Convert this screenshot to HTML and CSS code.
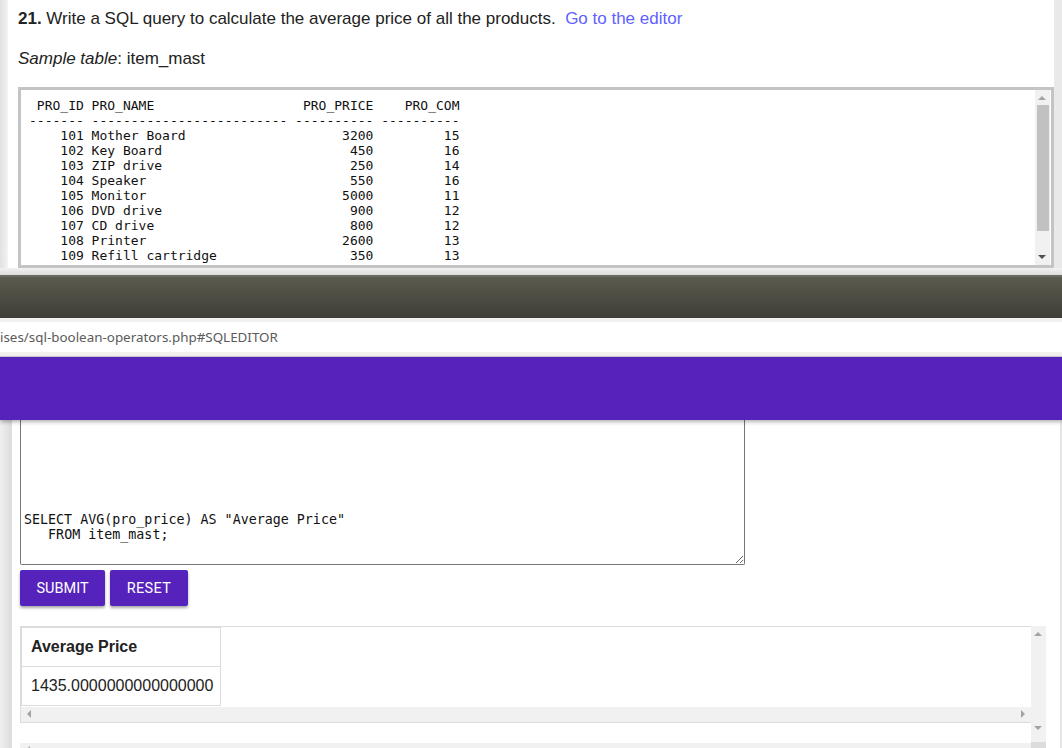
FILE: index.html
```html
<!DOCTYPE html>
<html>
<head>
<meta charset="utf-8">
<link rel="stylesheet" href="styles.css">
</head>
<body>
<div class="top">
  <div class="edge-l"></div>
  <div class="top-main">
    <p class="question"><b>21.</b> Write a SQL query to calculate the average price of all the products.&nbsp; <a class="link" href="#">Go to the editor</a></p>
    <p class="sample"><i>Sample table</i>: item_mast</p>
    <div class="prebox">
      <pre class="pretext"> PRO_ID PRO_NAME                   PRO_PRICE    PRO_COM
------- ------------------------- ---------- ----------
    101 Mother Board                    3200         15
    102 Key Board                        450         16
    103 ZIP drive                        250         14
    104 Speaker                          550         16
    105 Monitor                         5000         11
    106 DVD drive                        900         12
    107 CD drive                         800         12
    108 Printer                         2600         13
    109 Refill cartridge                 350         13</pre>
      <div class="vscroll">
        <span class="arr up light"></span>
        <div class="thumb"></div>
        <span class="arr down dark"></span>
      </div>
    </div>
  </div>
  <div class="edge-r"></div>
</div>
<div class="top-shade"></div>
<div class="titlebar"></div>
<div class="urlgap"></div>
<div class="urlbar"><span class="url">ises/sql-boolean-operators.php#SQLEDITOR</span></div>
<div class="urlgap bottom"></div>
<div class="appbar"></div>
<div class="lower">
  <div class="edge-l2"></div>
  <div class="lower-main">
    <textarea class="editor" spellcheck="false">SELECT AVG(pro_price) AS "Average Price"
   FROM item_mast;</textarea>
    <div class="buttons">
      <button class="btn btn-submit">Submit</button>
      <button class="btn btn-reset">Reset</button>
    </div>
    <div class="result">
      <div class="result-inner">
        <div class="hbox">
          <table class="restable">
            <tr><th>Average Price</th></tr>
            <tr><td>1435.0000000000000000</td></tr>
          </table>
          <div class="hbar"><span class="arr left"></span><span class="arr right"></span></div>
        </div>
        <div class="hbar second"><span class="arr left"></span></div>
      </div>
      <div class="vbar">
        <span class="arr up light"></span>
        <span class="arr down light"></span>
        <div class="corner"></div>
      </div>
    </div>
  </div>
  <div class="edge-r2"></div>
</div>
</body>
</html>
```
FILE: styles.css
```css
* { box-sizing: border-box; }
html, body { margin: 0; padding: 0; }
body {
  width: 1062px;
  height: 748px;
  overflow: hidden;
  background: #fff;
  font-family: "Liberation Sans", Arial, sans-serif;
  color: #222;
}

.top {
  display: flex;
  height: 268px;
  background: #fff;
}
.edge-l {
  width: 8px;
  background: linear-gradient(to right, #e2e2e2, #ededed 70%, #f6f6f6);
}
.edge-r {
  width: 8px;
  background: #e9e9e9;
}
.top-main {
  flex: 1;
  padding: 9px 0 0 10px;
  min-width: 0;
}
.question {
  margin: 0;
  font-size: 17px;
  line-height: 20px;
  color: #222;
}
.link {
  color: #5f5fff;
  text-decoration: none;
}
.sample {
  margin: 20px 0 0 0;
  font-size: 17px;
  line-height: 20px;
}
.prebox {
  margin-top: 18px;
  height: 181px;
  border: 3px solid #c4c4c4;
  display: flex;
  background: #fff;
}
.pretext {
  flex: 1;
  margin: 0;
  padding: 8px 0 0 8px;
  font-family: "DejaVu Sans Mono", monospace;
  font-size: 13px;
  line-height: 15px;
  color: #111;
  overflow: hidden;
}
.vscroll {
  width: 15px;
  margin-right: 1px;
  background: #f1f1f1;
  position: relative;
}
.thumb {
  position: absolute;
  left: 2px;
  right: 1px;
  top: 15px;
  height: 126px;
  background: #c1c1c1;
}
.arr {
  position: absolute;
  width: 0;
  height: 0;
}
.arr.up {
  top: 6px;
  left: 3px;
  border-left: 4px solid transparent;
  border-right: 4px solid transparent;
  border-bottom: 4px solid #a3a3a3;
}
.arr.down {
  bottom: 6px;
  left: 3px;
  border-left: 4px solid transparent;
  border-right: 4px solid transparent;
  border-top: 4px solid #a3a3a3;
}
.arr.down.dark { border-top-color: #505050; }
.arr.left {
  left: 6px;
  top: 3px;
  border-top: 4px solid transparent;
  border-bottom: 4px solid transparent;
  border-right: 4px solid #a3a3a3;
}
.arr.right {
  right: 6px;
  top: 3px;
  border-top: 4px solid transparent;
  border-bottom: 4px solid transparent;
  border-left: 4px solid #a3a3a3;
}

.top-shade {
  height: 7px;
  background: linear-gradient(to bottom, #f2f2f2, #dcdcdc);
}
.titlebar {
  height: 43px;
  border-top: 2px solid #6a6a64;
  background: linear-gradient(to bottom, #5b5b4f, #3e3e37);
}
.urlgap {
  height: 4px;
  background: #f2f1f0;
}
.urlgap.bottom {
  height: 5px;
  border-bottom: 1px solid #cfcfcf;
}
.urlbar {
  height: 30px;
  background: #fff;
  display: flex;
  align-items: center;
}
.url {
  font-family: "Noto Sans", "Open Sans", sans-serif;
  font-size: 13.4px;
  color: #5a5a5a;
  letter-spacing: 0;
}
.appbar {
  height: 63px;
  background: #5522bb;
  position: relative;
  z-index: 2;
  box-shadow: 0 2px 4px rgba(0, 0, 0, 0.3);
}

.lower {
  display: flex;
  height: 328px;
  overflow: hidden;
}
.edge-l2 {
  width: 12px;
  background: linear-gradient(to right, #f0f0f0, #e4e4e4 60%, #dcdcdc);
}
.edge-r2 {
  width: 2px;
  margin-left: 14px;
  background: #e4e4e4;
}
.lower-main {
  flex: 1;
  padding-left: 8px;
  min-width: 0;
}
.editor {
  display: block;
  width: 725px;
  height: 145px;
  margin: 0;
  border: 1px solid #767676;
  border-top: none;
  border-radius: 0 0 2px 2px;
  padding: 92px 2px 2px 3px;
  font-family: "DejaVu Sans Mono", monospace;
  font-size: 13.33px;
  line-height: 15px;
  color: #111;
  background: #fff;
  resize: both;
  outline: none;
}
.buttons {
  display: flex;
  gap: 5px;
  margin-top: 5px;
}
.btn {
  height: 36px;
  padding: 0;
  border: none;
  border-radius: 2px;
  background: #5522bb;
  color: #fff;
  font-family: Roboto, "Liberation Sans", sans-serif;
  font-size: 14.5px;
  text-transform: uppercase;
  text-align: center;
  box-shadow: 0 2px 3px rgba(0, 0, 0, 0.35);
}
.btn-submit { width: 85px; }
.btn-reset { width: 78px; letter-spacing: 0.3px; }
.result {
  margin-top: 20px;
  display: flex;
  width: 1026px;
}
.result-inner {
  flex: 1;
  min-width: 0;
}
.hbox {
  border: 1px solid #dcdcdc;
  border-right: none;
}
.restable {
  border-collapse: collapse;
  font-size: 16px;
  color: #222;
}
.restable th,
.restable td {
  border: 1px solid #dcdcdc;
  height: 39px;
  padding: 0 7px 0 9px;
  text-align: left;
  white-space: nowrap;
  font-family: "Liberation Sans", Arial, sans-serif;
}
.restable th { font-weight: bold; }
.hbar {
  position: relative;
  height: 15px;
  margin-top: 1px;
  background: #f1f1f1;
}
.hbar.second {
  margin-top: 20px;
  height: 15px;
}
.vbar {
  position: relative;
  width: 15px;
  height: 122px;
  background: #f1f1f1;
}
.vbar .arr.down { bottom: 18px; }
.vbar .corner {
  position: absolute;
  left: 0;
  right: 0;
  bottom: 0;
  height: 6px;
  background: #dcdcdc;
}
```
